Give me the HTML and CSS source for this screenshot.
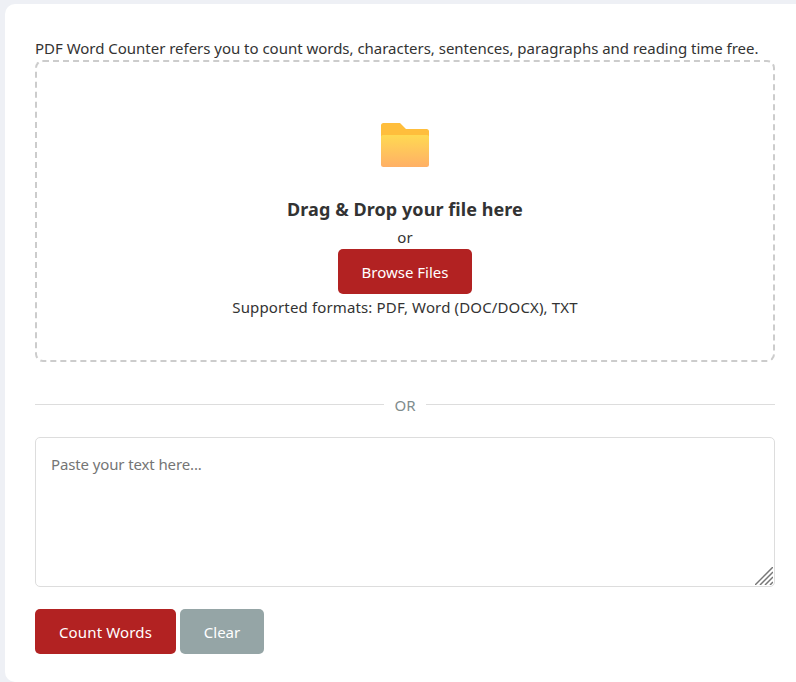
FILE: index.html
```html
<!DOCTYPE html>
<html lang="en">
<head>
    <meta charset="UTF-8">
    <meta name="viewport" content="width=device-width, initial-scale=1.0">
    <title>PDF Word Counter</title>
    <link rel="stylesheet" href="styles.css">
</head>
<body>
    <div class="card">
        <p class="intro">PDF Word Counter refers you to count words, characters, sentences, paragraphs and reading time free.</p>
        <div class="dropzone">
            <svg class="folder" width="48" height="44" viewBox="0 0 48 44">
                <defs>
                    <linearGradient id="folderFront" x1="0" y1="0" x2="0" y2="1">
                        <stop offset="0" stop-color="#ffd952"/>
                        <stop offset="1" stop-color="#ffb066"/>
                    </linearGradient>
                </defs>
                <path d="M0 2.500a2.500 2.500 0 0 1 2.500-2.500h16.500l6 6h20.500a2.500 2.500 0 0 1 2.500 2.500v6H0z" fill="#ffbe3c"/>
                <path d="M0 13.500a2 2 0 0 1 2-1.500h44a2 2 0 0 1 2 1.500v28a2.500 2.500 0 0 1-2.500 2.500h-43a2.500 2.500 0 0 1-2.500-2.500z" fill="url(#folderFront)"/>
            </svg>
            <h3>Drag &amp; Drop your file here</h3>
            <p class="or-text">or</p>
            <button class="btn btn-red btn-browse">Browse Files</button>
            <p class="formats">Supported formats: PDF, Word (DOC/DOCX), TXT</p>
        </div>
        <div class="divider"><span>OR</span></div>
        <div class="text-wrap">
            <textarea placeholder="Paste your text here..."></textarea>
            <svg class="grip" width="18" height="18" viewBox="0 0 18 18">
                <path d="M0 18L18 0M5 18L18 5M10 18L18 10M15 18L18 15" stroke="#777" stroke-width="1.500" fill="none"/>
            </svg>
        </div>
        <div class="actions">
            <button class="btn btn-red btn-count">Count Words</button>
            <button class="btn btn-grey">Clear</button>
        </div>
    </div>
</body>
</html>
```

FILE: styles.css
```css
html, body {
    height: 100%;
}
body {
    font-family: "Noto Sans", "Open Sans", sans-serif;
    font-size: 15px;
    color: #333;
    margin: 0;
    background-color: #eef0f5;
    overflow: hidden;
}
.card {
    box-sizing: border-box;
    width: 800px;
    height: 678px;
    margin: 4px 0 0 5px;
    padding: 33px 30px 0;
    background-color: #fff;
    border-radius: 10px;
}
.card, .actions, .dropzone {
    display: flex;
    flex-direction: column;
}
.intro {
    width: 740px;
    margin: 0;
    height: 23px;
    line-height: 23px;
    white-space: nowrap;
    letter-spacing: -0.02px;
}
.dropzone {
    box-sizing: border-box;
    width: 740px;
    height: 302px;
    border: 2px dashed #ccc;
    border-radius: 8px;
    align-items: center;
    padding-top: 61px;
}
.folder {
    display: block;
}
.dropzone h3 {
    margin: 28px 0 0;
    font-size: 18px;
    line-height: 28px;
    font-weight: 700;
    letter-spacing: 0.07px;
}
.or-text {
    margin: 4px 0 0;
    line-height: 20px;
}
.btn {
    height: 45px;
    padding: 0 24px;
    border: none;
    border-radius: 5px;
    color: #fff;
    font-family: inherit;
    font-size: 15px;
    cursor: pointer;
}
.btn-red {
    background-color: #b22222;
}
.btn-grey {
    background-color: #95a5a6;
    width: 84px;
    padding: 0;
}
.btn-browse {
    margin-top: 2px;
}
.btn-count {
    width: 141px;
    padding: 0;
    letter-spacing: 0.15px;
}
.formats {
    margin: 2px 0 0;
    line-height: 22px;
    letter-spacing: 0.14px;
}
.divider {
    width: 740px;
    margin-top: 33px;
    display: flex;
    align-items: center;
    gap: 10px;
    height: 20px;
    color: #7f8c8d;
}
.divider::before, .divider::after {
    content: "";
    flex: 1;
    border-top: 1px solid #ddd;
    margin-bottom: 2px;
}
.text-wrap {
    position: relative;
    width: 740px;
    height: 150px;
    margin-top: 22px;
}
textarea {
    display: block;
    box-sizing: border-box;
    width: 100%;
    height: 100%;
    padding: 16px 15px 15px;
    border: 1px solid #ddd;
    border-radius: 5px;
    font-family: inherit;
    font-size: 15px;
    letter-spacing: -0.12px;
    resize: none;
    outline: none;
}
textarea::placeholder {
    color: #757575;
}
.grip {
    position: absolute;
    right: 2px;
    bottom: 2px;
}
.actions {
    flex-direction: row;
    gap: 4px;
    margin-top: 22px;
}
```
